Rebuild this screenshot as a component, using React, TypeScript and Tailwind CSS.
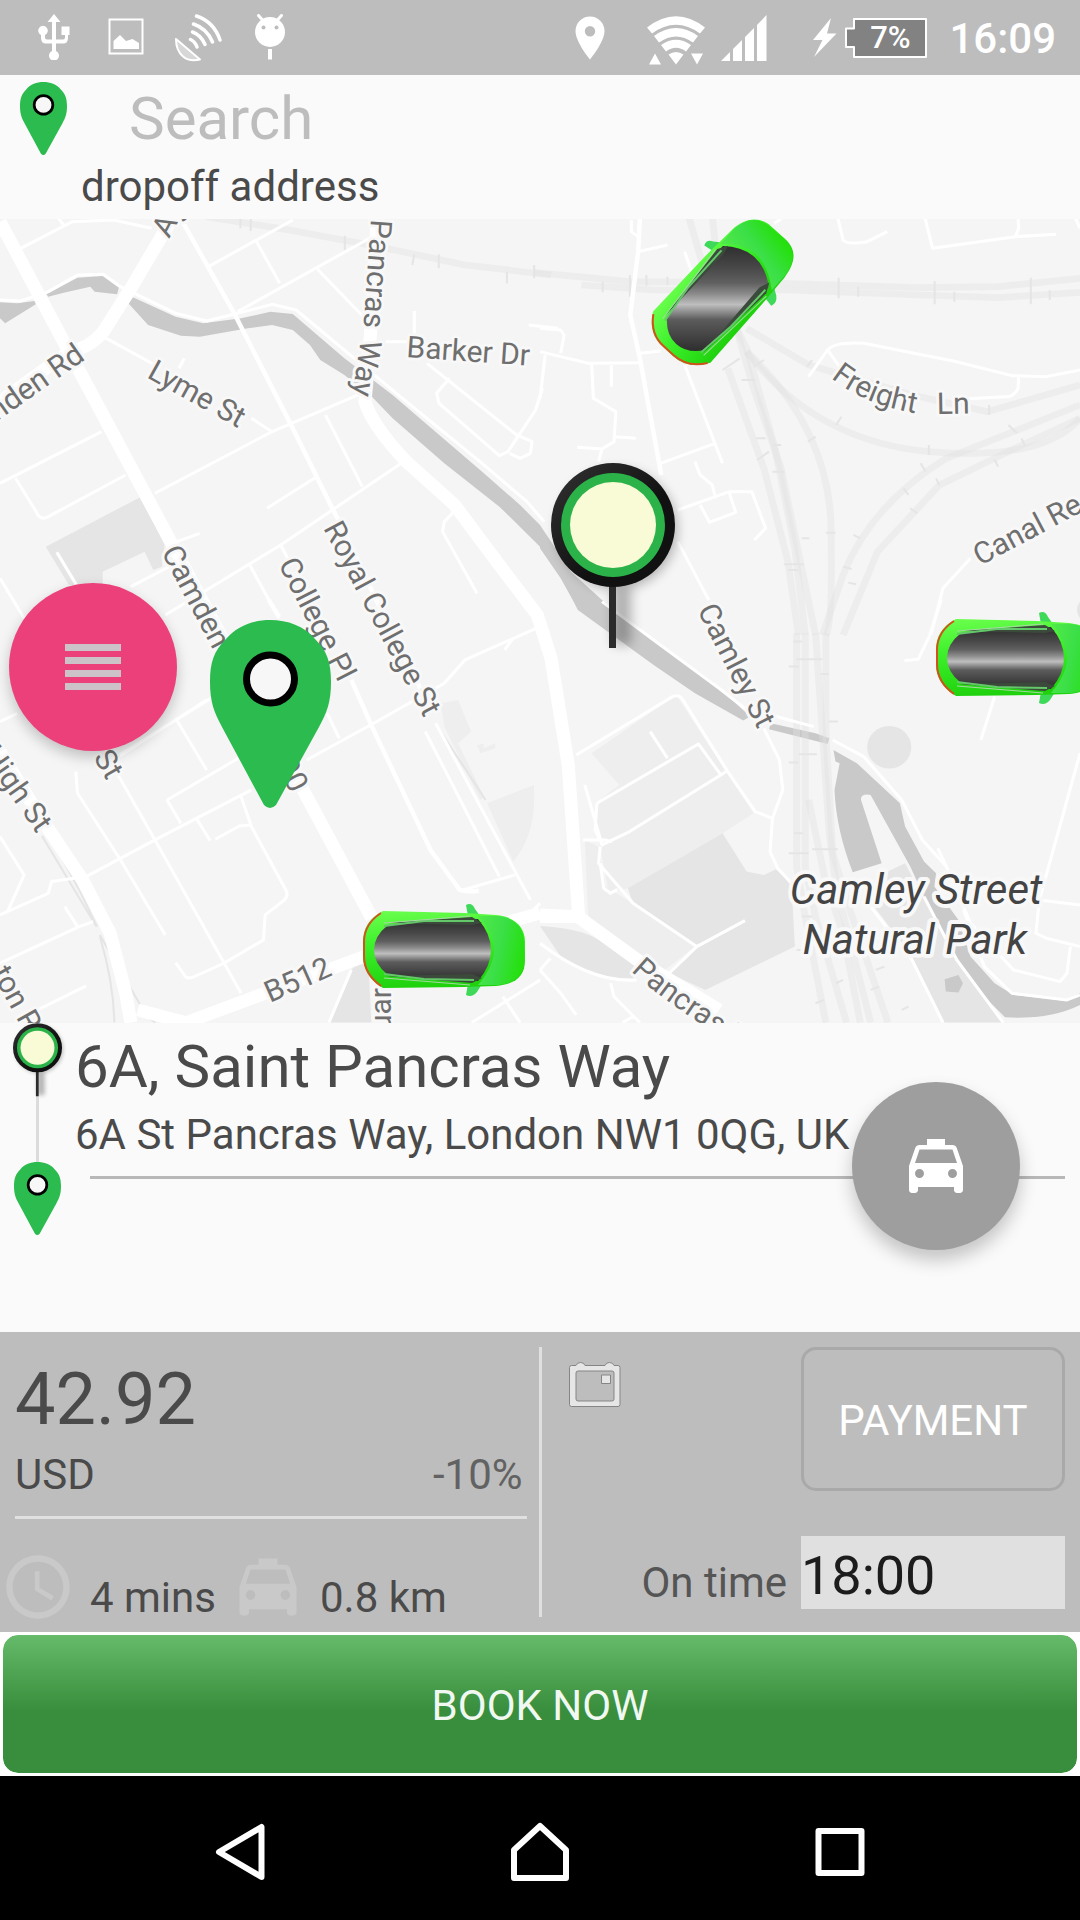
import type { ReactNode } from "react";
import { MdAccessTime, MdLocalTaxi } from "react-icons/md";

type Tile = {
  offset: string;
  areas: string[];
  lightAreas: string[];
  water: string[];
  rails: string[];
  sleepers: string[];
  lanes: string[];
  streets: string[];
  avenues: string[];
};

const tiles: Tile[] = [
  {
    offset: "translate(0 0)",
    areas: [
      "M133 995L410 845L478 990L470 1055L445 1065L420 1010L298 1070V1110L200 1110Z",
    ],
    lightAreas: [],
    water: [
      "M0 262L50 265L100 258L104 268L15 325L0 310Z",
      "M135 238L225 188L298 183L345 218L340 238L275 230L262 215L185 233L140 245Z",
      "M378 243L510 305L590 325L700 310L785 290L850 297L1000 430L1140 540L1400 770L1510 870L1568 930V995L1450 875L1290 745L1140 610L1080 545L1000 480L930 435L900 390L850 345L790 330L720 340L580 365L525 362L430 330L370 262Z",
    ],
    rails: ["M600 5L840 45L1100 95L1350 150L1600 180"],
    sleepers: ["M698 10V40M728 10V48M1001 62V105M1203 118L1197 150M1274 118V160M1472 170V205M1551 150V190"],
    lanes: [
      "M0 255L60 258L140 230L225 180L300 178L350 215L420 250L510 295L600 318L690 295L790 268L860 285L1040 440L1180 560L1400 745L1530 860L1580 920",
      "M60 100L210 20L330 15L440 40",
      "M170 10L185 30",
      "M605 155L850 15",
      "M745 80L812 205",
      "M690 290L1090 60",
      "M918 158L1050 300",
      "M305 368L450 450M520 460L535 430",
      "M730 610L790 650",
      "M0 805L295 650",
      "M45 790L105 890Q115 915 135 908L365 780",
      "M450 835L790 650L1050 535",
      "M775 880L915 788",
      "M945 600L1052 815",
      "M380 1115L500 1050",
      "M480 1200L815 990L1165 745",
      "M500 985L580 955",
      "M815 990L840 1040M725 1050L810 1210",
      "M165 1012L225 1115",
      "M1203 288V380M1120 380H1190",
      "M1240 445L1500 660L1545 680L1540 715L1510 730L1480 715",
      "M1305 490L1268 535L1275 565L1450 722L1475 710L1555 585L1575 520",
      "M1535 330L1620 340",
      "M1320 888L1290 920L1285 950L1385 1135",
      "M0 1090L70 1210",
    ],
    streets: ["M530 20L680 295L850 640L960 870L1000 950L1090 1150L1220 1420"],
    avenues: [
      "M0 20L190 390L480 950L880 1725L1080 2110",
      "M500 10L380 220L300 350Q260 400 200 410L0 560",
      "M1095 10L1080 300L1060 560Q1080 630 1180 740L1320 870L1450 1050L1560 1200L1600 1330L1650 1650L1680 2100",
    ],
  },
  {
    offset: "translate(1568 0)",
    areas: [],
    lightAreas: [],
    water: ["M0 930L90 1070L180 1155H95L60 1090L0 1000Z"],
    rails: [
      "M-20 172L260 200L700 205L1100 218L1330 215L1568 190",
      "M120 210L330 225L720 225L1100 240L1330 248L1568 232",
      "M430 0L470 140L600 400L680 690L740 1000L770 1260",
      "M500 0L520 200L570 340L620 520L700 760L760 1060L800 1260",
      "M545 460L650 760L720 1040L750 1260",
      "M600 340L780 450L1080 540L1300 590L1568 510",
      "M600 410Q800 680 1130 710T1568 610",
      "M600 410Q840 640 845 940T830 1260",
      "M1568 570L1180 730Q960 870 880 1080L820 1260",
      "M1568 610L1380 700L1160 810L980 1010L880 1260",
    ],
    sleepers: [
      "M261 180V245M309 180V212M182 200V232M370 185V210M867 188V250M924 215V245M1146 198V268M1203 230V260M1425 188V268M1480 225V255",
      "M585 495H625M530 465L580 430M620 455L650 435M628 670H655M630 735L665 710M675 690H700M675 770H710M760 970H782M708 1048H765M720 1065H750",
      "M775 455L790 435M860 630L875 605M778 680L800 665M830 953H858M1129 690V720M1304 570V600M1360 630L1385 655M1398 670L1408 692M1320 733L1330 755M1105 745L1120 770M1150 790L1160 812M1055 820L1070 840M910 960L930 970M1075 880L1095 895M880 1055L905 1062M895 1103L918 1108",
    ],
    lanes: [
      "M265 15V50L285 65M285 110L370 90M420 110L440 170M680 25L700 12",
      "M865 10L880 75Q890 90 950 80L1008 50M1118 10L1140 100L1380 65L1498 58M1388 10L1390 40L1380 65M1555 10L1568 40",
      "M0 340L60 345L70 360L60 415M0 410L140 445L290 443M150 445L155 550L220 590L215 680L180 702L108 697M215 665L278 670M207 450V515M180 702L170 740",
      "M290 415L350 408M420 450L530 745M350 745L508 685M15 420L0 550M450 740L465 780L500 810L510 850M400 885L550 830H615L655 940L622 975M465 870L492 922L568 892L550 835",
      "M400 980L490 1155",
      "M780 485L835 405Q855 380 940 385L1200 438L1370 482L1470 485L1568 465M835 405L880 470M1390 485L1388 520Q1375 548 1350 545L1230 552",
      "M1250 1030L1170 1120L1135 1260",
    ],
    streets: ["M290 10L285 110L262 300L290 430L352 780"],
    avenues: [],
  },
  {
    offset: "translate(0 1155)",
    areas: ["M1020 1110L1040 1085L1070 1095L1078 1268H955Z"],
    lightAreas: [
      "M1280 310L1330 300L1368 395L1330 430L1405 590L1395 600L1290 380Z",
      "M1415 610L1550 555Q1560 700 1490 785Z",
      "M1385 435L1405 430V445L1438 430V445L1395 460Z",
    ],
    water: [],
    rails: [],
    sleepers: [
      "M122 708L280 980M135 690L230 870L282 980M290 1010Q330 1150 332 1268M290 1005L410 1220M435 1255L450 1268M1270 380L1410 600",
    ],
    lanes: [
      "M0 365L50 340M300 500L600 300M340 470L620 290",
      "M220 515L225 580L350 780L480 1005",
      "M340 520L450 720L700 1180",
      "M510 355L600 510M485 600L700 470M485 600L525 670M570 655L610 722M625 718L695 678L730 675",
      "M0 945L140 880L150 845L250 830L450 720L730 570",
      "M700 590L730 680L830 870Q840 890 820 905L770 945L765 1020L650 1090L560 1132Q540 1138 535 1125L510 1088",
      "M0 710L70 825L22 935M188 920L228 985M0 1090L230 980L270 965M60 1255L250 1158",
      "M890 480L1085 370L1290 250L1350 180L1568 80M1465 150L1490 115",
      "M950 340L985 415",
      "M1235 395L1450 830M1265 370L1540 900M1345 870L1495 825",
      "M1020 1110L955 1268M1370 1268L1568 1140M1460 1190L1510 1268",
      "M1568 910L1530 950",
    ],
    streets: ["M780 0L810 50M1020 240L1080 380L1250 750L1335 870Q1360 878 1390 872"],
    avenues: [
      "M0 455L110 640L240 840L320 1000L365 1180L380 1268",
      "M400 1230L540 1268L900 1130L1070 1065",
      "M1480 965L1568 940",
    ],
  },
  {
    offset: "translate(1568 1155)",
    areas: [
      "M255 865L530 700L600 815L650 825L685 808L730 850L740 1040L480 1170L375 1120L450 1040L270 910Z",
      "M0 978Q120 985 170 1020L290 1110L270 1135Q150 1140 60 1070Z",
      "M950 442a64 64 0 1 0 128 0a64 64 0 1 0 -128 0",
      "M980 830L1060 790L1110 890L1170 1000L1215 1090L1330 1255L1345 1268H1175L1080 1070L970 920Z",
      "M1568 5Q1550 30 1568 55Z",
    ],
    lightAreas: [
      "M150 460L395 285L620 640L530 700L255 865L200 880L170 720L160 610L230 555Z",
      "M130 720L170 740L190 860L270 910L450 1040L350 1120L140 950Z",
    ],
    water: [
      "M95 0H180L300 95L500 245L610 350L590 362L450 280L330 195L110 30Z",
      "M670 370L800 400L840 415L835 432L665 388Z",
      "M852 450L920 490L1045 610L1060 680L1115 785L1150 820L1145 860L1215 960L1250 1070L1320 1150L1375 1185L1520 1202L1568 1180V1215Q1480 1260 1350 1252L1290 1190L1215 1080L1170 1000L1115 890L1075 800L960 585Q930 580 932 600L992 790L908 817Q860 690 855 570L870 490L858 485Z",
      "M1175 1138L1215 1125L1228 1150L1215 1178L1178 1175Z",
    ],
    rails: [
      "M745 100V800L770 950L830 1268",
      "M770 100V800L800 950L890 1268",
      "M800 100L820 400L840 700L860 860L960 1268",
      "M830 100V400L850 760L900 930L1010 1268",
      "M780 600L830 850L880 1000L930 1268",
    ],
    sleepers: [
      "M735 125H760M745 178H820M722 200H752M815 222H838M838 365H865M752 463H804M722 488H750M738 700H762M722 760H780M790 748H865M760 950H790M745 1050H770",
      "M960 1170L985 1160M975 1110L1000 1100M1050 1230L1070 1220M800 1210L825 1200M860 1150L880 1140",
    ],
    lanes: [
      "M180 5L330 120L520 265L600 330L670 345L795 380",
      "M105 465L385 290Q405 282 415 300L545 515L625 635L675 655L668 755L690 805L730 850",
      "M320 395L370 475M165 610L460 432L525 525L540 515M525 525L260 695L180 735L130 555M165 610L160 690L180 735M125 720H190L210 725",
      "M175 740L170 790L270 910L455 1040M175 790L185 865L205 880L225 868M375 1120L455 1040L595 962",
      "M650 385L695 480L705 570L675 655",
      "M850 420L940 470L1050 600L1110 720L1180 800L1250 970L1375 1110L1510 1145L1530 1120L1540 1040M1568 1040L1470 1015L1440 1000L1450 900L1568 915M1450 900L1568 460",
      "M1155 745L1180 800M1165 0L1130 110L1098 178L1058 182M1320 290L1280 420",
      "M960 920L1080 1080L1170 1268M1115 890L1210 1080L1345 1268M1230 930L1290 1100L1370 1180L1530 1200L1568 1185",
      "M0 1030Q150 1150 280 1140M0 1110L60 1180L105 1245M205 1150L215 1190L290 1268M240 1268L270 1250M0 1110L30 1075",
    ],
    streets: [],
    avenues: ["M0 945L110 950L290 1085L520 1230", "M0 950H120"],
  },
];

type Label = { text: string; x: number; y: number; angle: number; end?: boolean };

const labels: Label[] = [
  { text: "Barker Dr", x: 406, y: 138, angle: 4 },
  { text: "Lyme St", x: 146, y: 158, angle: 29 },
  { text: "nden Rd", x: 86, y: 140, angle: -35, end: true },
  { text: "Ag", x: 169, y: 20, angle: -62 },
  { text: "Pancras", x: 371, y: 0, angle: 94 },
  { text: "Way", x: 361, y: 120, angle: 99 },
  { text: "Royal College St", x: 323, y: 309, angle: 62 },
  { text: "College Pl", x: 278, y: 345, angle: 63 },
  { text: "Camden", x: 161, y: 333, angle: 62 },
  { text: "A400", x: 291, y: 575, angle: 63, end: true },
  { text: "St", x: 93, y: 538, angle: 60 },
  { text: "High St", x: 37, y: 615, angle: 55, end: true },
  { text: "ton Rd", x: 33, y: 829, angle: 61, end: true },
  { text: "B512", x: 270, y: 784, angle: -24 },
  { text: "uar", x: 391, y: 769, angle: -90, end: true },
  { text: "Camley St", x: 697, y: 391, angle: 63 },
  { text: "Canal Re", x: 980, y: 347, angle: -28 },
  { text: "Ln", x: 937, y: 195, angle: -1 },
];

function PinIcon() {
  return (
    <>
      <path
        d="M60 0C78 0 94 6 105 19C117 31 121 42 121 62C121 82 117 92 109 107L66 185Q60 191 54 185L12 107C4 92 0 82 0 62C0 42 4 31 16 19C27 6 43 0 60 0Z"
        fill="#2bbb4e"
      />
      <circle cx="60.5" cy="59" r="24" fill="#f7f7f7" stroke="#000" strokeWidth="7" />
    </>
  );
}

function TargetIcon({ id }: { id: string }) {
  return (
    <>
      <defs>
        <linearGradient id={`${id}-ring`} x1="0" y1="0" x2="1" y2="1">
          <stop offset="0" stopColor="#333" />
          <stop offset="0.6" stopColor="#111" />
        </linearGradient>
        <filter id={`${id}-soft`} x="-30%" y="-30%" width="180%" height="160%">
          <feGaussianBlur stdDeviation="6" />
        </filter>
      </defs>
      <g filter={`url(#${id}-soft)`} opacity="0.28">
        <circle cx="66" cy="66" r="60" />
        <path d="M62 120h18v62h-18z" />
      </g>
      <path d="M58 120h7v65h-7z" fill="#2b2b2b" />
      <circle cx="62" cy="62" r="62" fill={`url(#${id}-ring)`} />
      <circle cx="62" cy="62" r="52" fill="#2bb34a" />
      <circle cx="62" cy="62" r="43" fill="#f9fad6" />
    </>
  );
}

function Car({ id, x, y, angle = 0 }: { id: string; x: number; y: number; angle?: number }) {
  return (
    <g transform={`translate(${x} ${y}) rotate(${angle})`}>
      <defs>
        <linearGradient
          id={`${id}-glass`}
          gradientUnits="userSpaceOnUse"
          x1="0"
          y1={angle ? -48 : -30}
          x2="0"
          y2={angle ? 60 : 30}
          gradientTransform={`rotate(${-angle})`}
        >
          <stop offset="0" stopColor="#2c2c2c" />
          <stop offset="0.22" stopColor="#484848" />
          <stop offset="0.36" stopColor="#606060" />
          <stop offset="0.46" stopColor="#8a8a8a" />
          <stop offset="0.56" stopColor="#bebebe" />
          <stop offset="0.7" stopColor="#5c5c5c" />
          <stop offset="1" stopColor="#2c2c2c" />
        </linearGradient>
        <linearGradient id={`${id}-body`} x1="0" y1="0" x2="0.2" y2="1">
          <stop offset="0" stopColor="#6dff4f" />
          <stop offset="0.45" stopColor="#3cf02a" />
          <stop offset="1" stopColor="#1fd20d" />
        </linearGradient>
        <linearGradient id={`${id}-hood`} x1="0" y1="0.2" x2="1" y2="0.5">
          <stop offset="0" stopColor="#4fe94a" />
          <stop offset="0.5" stopColor="#3bdf47" />
          <stop offset="1" stopColor="#25e00e" />
        </linearGradient>
      </defs>
      <path d="M22 -45Q28 -48 31 -41L36 -34H24Z" fill="#3fd95a" />
      <path d="M22 45Q28 48 33 42L38 34H24Z" fill="#3fd95a" />
      <path
        d="M-61 -39L20 -37L52 -35C72 -33 81 -22 81 -8V10C81 26 72 34 52 36L20 37L-61 38Q-81 26 -81 6V-8Q-81 -29 -61 -39Z"
        fill={`url(#${id}-body)`}
      />
      <path d="M-63 -37Q-80 -26 -80 -8V6Q-80 24 -63 36" fill="none" stroke="#d2521c" strokeWidth="2" />
      <path
        d="M34 -34L54 -34C72 -32 80 -22 80 -8V10C80 25 72 33 54 35L34 35Q50 16 50 0T34 -34Z"
        fill={`url(#${id}-hood)`}
      />
      <path
        d="M-56 -25L34 -31Q47 -16 47 0T34 31L-56 25Q-70 14 -70 0T-56 -25Z"
        fill={`url(#${id}-glass)`}
      />
      <path d="M-58 -27L28 -33L38 -27L28 -25Z" fill="#3c4a3c" />
      <path d="M-58 26L28 33L38 28L28 24Z" fill="#3c4a3c" />
      <path d="M-60 -24L-20 -29L30 -29M-60 24L-20 29L30 30" fill="none" stroke="#64c76a" strokeWidth="2" />
      <path d="M-60 -27L26 -34M-60 28L26 35" fill="none" stroke="#a7d8a4" strokeWidth="1" />
    </g>
  );
}

function Layer({ pick, children }: { pick: keyof Tile; children: (d: string, key: string) => ReactNode }) {
  return (
    <>
      {tiles.map((tile) => (
        <g key={tile.offset} transform={tile.offset}>
          {(tile[pick] as string[]).map((d) => children(d, d))}
        </g>
      ))}
    </>
  );
}

function CityMap() {
  return (
    <svg viewBox="0 0 1080 804" className="block w-full bg-[#f5f5f5]" role="img" aria-label="Map">
      <g transform="translate(0 -4) scale(0.3444 0.3333)" fill="none" strokeLinejoin="round">
        <Layer pick="lightAreas">{(d, key) => <path key={key} d={d} fill="#eeeeee" />}</Layer>
        <Layer pick="areas">{(d, key) => <path key={key} d={d} fill="#e5e5e5" />}</Layer>
        <Layer pick="water">{(d, key) => <path key={key} d={d} fill="#c9c9c9" />}</Layer>
        <Layer pick="rails">
          {(d, key) => <path key={key} d={d} stroke="#e0e0e0" strokeOpacity="0.4" strokeWidth="20" />}
        </Layer>
        <Layer pick="sleepers">{(d, key) => <path key={key} d={d} stroke="#e5e5e5" strokeWidth="6" />}</Layer>
        <Layer pick="lanes">{(d, key) => <path key={key} d={d} stroke="#fff" strokeWidth="9" />}</Layer>
        <Layer pick="streets">{(d, key) => <path key={key} d={d} stroke="#fff" strokeWidth="13" />}</Layer>
        <Layer pick="avenues">{(d, key) => <path key={key} d={d} stroke="#fff" strokeWidth="38" />}</Layer>
      </g>

      <g
        fontSize="30"
        fill="#6f6f6f"
        stroke="#f8f8f8"
        strokeWidth="6"
        strokeLinejoin="round"
        style={{ paintOrder: "stroke" }}
      >
        {labels.map((label) => (
          <text
            key={`${label.text}-${label.x}`}
            transform={`translate(${label.x} ${label.y}) rotate(${label.angle})`}
            textAnchor={label.end ? "end" : "start"}
          >
            {label.text}
          </text>
        ))}
        <path id="freight" d="M831 159Q872 192 940 197" fill="none" stroke="none" />
        <text>
          <textPath href="#freight">Freight</textPath>
        </text>
        <path id="pancras" d="M631 752Q668 788 780 854" fill="none" stroke="none" />
        <text>
          <textPath href="#pancras">Pancras Rd</textPath>
        </text>
        <g fontSize="42" fontStyle="italic" fill="#444" textAnchor="middle" strokeWidth="8">
          <text x="916" y="685">
            Camley Street
          </text>
          <text x="915" y="735">
            Natural Park
          </text>
        </g>
      </g>

      <Car id="car-a" x={723} y={73} angle={-48} />
      <Car id="car-b" x={1017} y={439} />
      <Car id="car-c" x={444} y={731} />
      <g transform="translate(551 244)">
        <TargetIcon id="pickup-map" />
      </g>
      <g transform="translate(210 401)">
        <PinIcon />
      </g>
    </svg>
  );
}

function StatusBar() {
  return (
    <div className="flex h-[75px] items-center justify-between bg-[#bdbdbd] pr-6 pl-[18px] text-white">
      <div className="flex">
        <div className="flex w-[72px] justify-center">
          <svg width="32" height="46" viewBox="0 0 32 46" fill="currentColor">
            <path d="M16 0L22.500 8H18V25.500H25Q27 25.500 27 23.500V21H23.500V12.500H31.500V21H30V24Q30 29.500 25 29.500H18V37A5 5 0 1 1 14 37V29.500H8Q3 29.500 3 24V21A4.800 4.800 0 1 1 7 21V23.500Q7 25.500 9 25.500H14V8H9.500Z" />
          </svg>
        </div>
        <div className="flex w-[72px] justify-center">
          <svg width="36" height="46" viewBox="0 0 36 46" fill="currentColor">
            <path d="M1.500 5.500H34.500V39.500H1.500Z" fill="none" stroke="currentColor" strokeWidth="2" />
            <path d="M5.500 35V27L12 21L18 27L24.500 25L31 29V35Z" />
          </svg>
        </div>
        <div className="flex w-[72px] justify-center">
          <svg width="48" height="48" viewBox="0 0 48 48" fill="none" stroke="currentColor" strokeLinecap="round">
            <path d="M2 25C2 40 12 49 26 45.500Z" strokeWidth="2" fill="#fff" fillOpacity="0.4" strokeLinejoin="round" />
            <path d="M16.500 25.500Q21 27.500 23 33M18.500 18Q27 21 31 30.500M19.500 10Q33 14.500 38.500 28M22.500 2Q40 8 46 26" strokeWidth="3.500" />
          </svg>
        </div>
        <div className="flex w-[72px] justify-center">
          <svg width="32" height="46" viewBox="0 0 32 46">
            <circle cx="16" cy="18" r="15" fill="#fff" />
            <path d="M4.500 1.500L8.500 6M27.500 1.500L23.500 6" stroke="#fff" strokeWidth="3" strokeLinecap="round" />
            <circle cx="9.500" cy="13.500" r="2" fill="#bdbdbd" />
            <circle cx="22.500" cy="13.500" r="2" fill="#bdbdbd" />
            <path d="M14 35H18V45.500H14Z" fill="#fff" />
          </svg>
        </div>
      </div>

      <div className="flex items-center">
        <svg width="30" height="48" viewBox="0 0 30 48" fill="currentColor">
          <path
            fillRule="evenodd"
            d="M15 2.500A14.500 14.500 0 0 1 29.500 17C29.500 28 15 45.500 15 45.500S.5 28 .5 17A14.500 14.500 0 0 1 15 2.500ZM15 12a5.200 5.200 0 1 0 0 10.400a5.200 5.200 0 0 0 0 -10.400Z"
          />
        </svg>
        <svg width="58" height="50" viewBox="0 0 58 50" fill="currentColor" className="mt-1 ml-[42px]">
          <path d="M0 12.500Q29 -10 58 12.500L53 18.500Q29 1 5 18.500Z" />
          <path d="M7 21Q29 5 51 21L46 27.500Q29 15.500 12 27.500Z" />
          <path d="M14 30Q29 19.500 44 30L39 36.500Q29 29 19 36.500Z" />
          <path d="M21.500 39.500Q29 34.500 36.500 39.500L29 49.500Z" />
          <path d="M8 38.500L14 49.500H2ZM44 38.500H56L50 49.500Z" />
        </svg>
        <svg width="46" height="46" viewBox="0 0 46 46" fill="currentColor" className="ml-4">
          <path d="M0 46L9 37V46ZM12 46V34L21 25V46ZM24 46V22L33 13V46ZM36 46V10L45.500 0V46Z" />
        </svg>
        <svg width="24" height="40" viewBox="0 0 24 40" fill="currentColor" className="ml-[46px]">
          <path d="M18 0L0 22H9.500L1 39L23.500 15.500H14Z" />
        </svg>
        <div className="relative ml-2 flex h-10 w-[82px] items-center justify-center pl-2 text-[31px] leading-10 font-medium">
          <svg viewBox="0 0 82 40" className="absolute inset-0 h-full w-full">
            <path d="M9 1H81V39H9V29H1V10.500H9Z" fill="#828282" stroke="#fff" strokeWidth="2" strokeLinejoin="round" />
          </svg>
          <span className="relative">7%</span>
        </div>
        <span className="ml-[22px] pt-[2px] text-[42px] leading-[48px] font-medium">16:09</span>
      </div>
    </div>
  );
}

function SearchHeader() {
  return (
    <header className="bg-[#fafafa] pt-[7px] pb-2">
      <div className="flex items-start gap-[62px] pl-5">
        <svg width="47" height="73" viewBox="0 0 121 188" className="shrink-0">
          <PinIcon />
        </svg>
        <input
          id="dropoff"
          type="text"
          placeholder="Search"
          className="h-[73px] min-w-0 flex-1 bg-transparent text-6xl leading-[72px] text-[#4a4a4a] outline-none placeholder:text-[#bdbdbd]"
        />
      </div>
      <label htmlFor="dropoff" className="mt-2 block pl-[81px] text-[42px] leading-[48px] text-[#4a4a4a]">
        dropoff address
      </label>
    </header>
  );
}

function PickupAddress() {
  return (
    <section className="relative flex min-h-[309px] gap-[13px] bg-[#fafafa] pr-[15px] pl-[13px]">
      <div className="flex w-[49px] shrink-0 flex-col items-center">
        <svg width="49" height="74" viewBox="0 0 124 186" className="overflow-visible">
          <TargetIcon id="pickup" />
        </svg>
        <div className="h-[65px] w-[3px] bg-[#dcdcdc]" />
        <svg width="47" height="73" viewBox="0 0 121 188">
          <PinIcon />
        </svg>
      </div>
      <div className="min-w-0 flex-1 pt-2 text-[#4a4a4a]">
        <h1 className="text-6xl leading-[72px]">6A, Saint Pancras Way</h1>
        <p className="mt-2 text-[42px] leading-[48px]">6A St Pancras Way, London NW1 0QG, UK</p>
        <hr className="mt-[17px] ml-[15px] border-t-[3px] border-[#b8b8b8]" />
      </div>
      <button
        type="button"
        aria-label="Choose car"
        className="absolute top-[59px] right-[60px] flex size-[168px] items-center justify-center rounded-full bg-[#9e9e9e] text-white shadow-[0_10px_18px_rgba(0,0,0,0.22)]"
      >
        <MdLocalTaxi size={72} />
      </button>
    </section>
  );
}

function TripPanel() {
  return (
    <section className="grid grid-cols-[1fr_3px_1fr] bg-[#bdbdbd] text-[42px] leading-[48px] text-[#4a4a4a]">
      <div className="pt-[26px] pb-[7px]">
        <p className="pl-[15px] text-7xl leading-[84px]">42.92</p>
        <div className="mt-[9px] mr-3 ml-[15px] flex justify-between border-b-[3px] border-[#e0e0e0] pb-[17px]">
          <span>USD</span>
          <span className="pr-1 text-[#626262]">-10%</span>
        </div>
        <div className="mt-[30px] flex gap-[14px]">
          <MdAccessTime size={76} className="shrink-0 text-[#c9c9c9]" />
          <span className="pt-[25px]">4 mins</span>
          <MdLocalTaxi size={76} className="shrink-0 text-[#c9c9c9]" />
          <span className="pt-[25px]">0.8 km</span>
        </div>
      </div>

      <div className="my-[15px] bg-[#e0e0e0]" />

      <div className="flex flex-col justify-between pt-[15px] pr-[15px] pb-[23px] pl-[27px]">
        <div className="flex items-start justify-between">
          <button type="button" aria-label="Pick a date" className="mt-[15px]">
            <svg width="52" height="46" viewBox="0 0 52 46" stroke="#858585">
              <path
                fillRule="evenodd"
                fill="#e6e6e6"
                d="M2.500 3.500H7Q8 .5 11.500 .5T16 3.500H36Q37 .5 40.500 .5T45 3.500H49Q51 3.500 51 5.500V42.500Q51 44.500 49 44.500H2.500Q.5 44.500 .5 42.500V5.500Q.5 3.500 2.500 3.500ZM9 9Q7 9 7 11V37Q7 39 9 39H43Q45 39 45 37V11Q45 9 43 9Z"
              />
              <path d="M32.500 13H41.500V21.500H32.500Z" fill="#e6e6e6" />
            </svg>
          </button>
          <button
            type="button"
            className="h-36 w-[264px] rounded-[15px] border-[3px] border-[#a9a9a9] pt-[3px] text-center text-white"
          >
            PAYMENT
          </button>
        </div>
        <div className="flex items-end justify-end gap-[14px]">
          <label htmlFor="ontime" className="mb-[2px] text-[#555]">
            On time
          </label>
          <input
            id="ontime"
            type="text"
            defaultValue="18:00"
            className="h-[73px] w-[264px] bg-[#e0e0e0] pt-[5px] text-[54px] text-[#1c1c1c] outline-none"
          />
        </div>
      </div>
    </section>
  );
}

function NavBar() {
  return (
    <nav className="grid h-36 grid-cols-3 bg-black px-[90px] pt-2 text-white">
      <button type="button" aria-label="Back" className="flex items-center justify-center">
        <svg width="52" height="60" viewBox="0 0 52 60" fill="none" stroke="currentColor" strokeWidth="6" strokeLinejoin="round">
          <path d="M47.500 5V55L5 30Z" />
        </svg>
      </button>
      <button type="button" aria-label="Home" className="flex items-center justify-center">
        <svg width="60" height="60" viewBox="0 0 60 60" fill="none" stroke="currentColor" strokeWidth="6" strokeLinejoin="round">
          <path d="M30 4L56 28V56H4V28Z" />
        </svg>
      </button>
      <button type="button" aria-label="Recent apps" className="flex items-center justify-center">
        <svg width="50" height="48" viewBox="0 0 50 48" fill="none" stroke="currentColor" strokeWidth="6" strokeLinejoin="round">
          <path d="M3.500 3H46.500V45H3.500Z" />
        </svg>
      </button>
    </nav>
  );
}

export default function App() {
  return (
    <div className="flex min-h-screen w-full flex-col overflow-x-hidden bg-white font-['Roboto',sans-serif]">
      <StatusBar />
      <SearchHeader />

      <main className="relative">
        <CityMap />
        <button
          type="button"
          aria-label="Menu"
          className="absolute top-[364px] left-[9px] flex size-[168px] flex-col items-center justify-center gap-[6px] rounded-full bg-[#ec407a] shadow-[0_6px_14px_rgba(0,0,0,0.22)]"
        >
          <span className="h-[7px] w-14 bg-[#cbc3c7]" />
          <span className="h-[7px] w-14 bg-[#cbc3c7]" />
          <span className="h-[7px] w-14 bg-[#cbc3c7]" />
          <span className="h-[7px] w-14 bg-[#cbc3c7]" />
        </button>
      </main>

      <PickupAddress />
      <TripPanel />

      <button
        type="button"
        className="h-36 rounded-[18px] border-[3px] border-white bg-linear-to-b from-[#66bb6a] to-[#388e3c] to-55% bg-clip-padding pt-[3px] text-[42px] leading-[48px] text-[#f1f8f1]"
      >
        BOOK NOW
      </button>
      <NavBar />
    </div>
  );
}
